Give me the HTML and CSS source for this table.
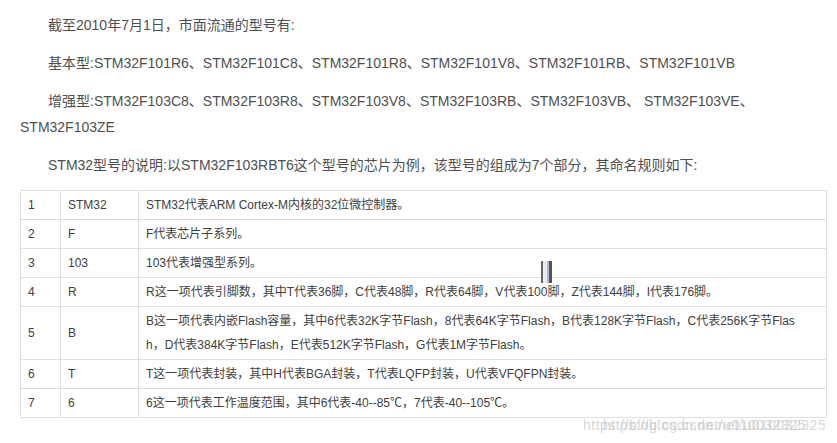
FILE: index.html
```html
<!DOCTYPE html>
<html lang="zh-CN">

<head>
    <meta charset="UTF-8">
    <meta name="viewport" content="width=device-width, initial-scale=1.0">
    <title>STM32型号</title>
    <link rel="stylesheet" href="styles.css">
</head>

<body>
    <div class="article">
        <p>截至2010年7月1日，市面流通的型号有:</p>
        <p>基本型:STM32F101R6、STM32F101C8、STM32F101R8、STM32F101V8、STM32F101RB、STM32F101VB</p>
        <p>增强型:STM32F103C8、STM32F103R8、STM32F103V8、STM32F103RB、STM32F103VB、 STM32F103VE、STM32F103ZE</p>
        <p>STM32型号的说明:以STM32F103RBT6这个型号的芯片为例，该型号的组成为7个部分，其命名规则如下:</p>

        <table class="spec-table">
            <colgroup>
                <col class="col-no">
                <col class="col-code">
                <col>
            </colgroup>
            <tbody>
                <tr><td>1</td><td>STM32</td><td class="desc">STM32代表ARM Cortex-M内核的32位微控制器。</td></tr>
                <tr><td>2</td><td>F</td><td class="desc">F代表芯片子系列。</td></tr>
                <tr><td>3</td><td>103</td><td class="desc">103代表增强型系列。</td></tr>
                <tr><td>4</td><td>R</td><td class="desc">R这一项代表引脚数，其中T代表36脚，C代表48脚，R代表64脚，V代表100脚，Z代表144脚，I代表176脚。</td></tr>
                <tr><td>5</td><td>B</td><td class="desc">B这一项代表内嵌Flash容量，其中6代表32K字节Flash，8代表64K字节Flash，B代表128K字节Flash，C代表256K字节Flash，D代表384K字节Flash，E代表512K字节Flash，G代表1M字节Flash。</td></tr>
                <tr><td>6</td><td>T</td><td class="desc">T这一项代表封装，其中H代表BGA封装，T代表LQFP封装，U代表VFQFPN封装。</td></tr>
                <tr><td>7</td><td>6</td><td class="desc">6这一项代表工作温度范围，其中6代表-40--85℃，7代表-40--105℃。</td></tr>
            </tbody>
        </table>
    </div>

    <div class="caret"><span class="caret-gap"></span><span class="caret-bars"></span></div>

    <div class="watermark">
        <span class="wm wm-a">https://blog.csdn.net/u010032325</span>
        <span class="wm wm-b">https://blog.csdn.net/u010032325</span>
    </div>
</body>

</html>
```

FILE: styles.css
```css
* {
    margin: 0;
    padding: 0;
    box-sizing: border-box;
}

body {
    background: #fff;
    font-family: "Liberation Sans", Arial, "Noto Sans CJK SC", sans-serif;
    color: #4f4f4f;
    position: relative;
    min-height: 443px;
    overflow: hidden;
}

.article {
    padding: 12px 10px 0 20px;
}

.article p {
    font-size: 14px;
    line-height: 26px;
    text-indent: 28px;
    margin-bottom: 12px;
}

.spec-table {
    margin-top: 2px;
    width: 807px;
    table-layout: fixed;
    border-collapse: collapse;
    font-size: 12px;
    line-height: 24px;
    color: #404040;
}

.col-no {
    width: 40px;
}

.col-code {
    width: 78px;
}

.spec-table td {
    border: 1px solid #dfdfdf;
    padding: 2px 6px 2px 7px;
    vertical-align: middle;
    word-break: break-all;
}

.spec-table td.desc {
    padding-right: 16px;
}

.caret {
    position: absolute;
    left: 500px;
    top: 261px;
    width: 113px;
    height: 24px;
}

.caret-gap {
    position: absolute;
    left: 0;
    bottom: 5px;
    width: 113px;
    height: 2px;
    background: #fff;
}

.caret-bars {
    position: absolute;
    left: 41px;
    top: 0;
    width: 11px;
    height: 22px;
    background: linear-gradient(90deg, #666 0 2px, #ececec 2px 6px, #a9b8dc 6px 8px, #555 8px 11px);
}

.watermark {
    position: absolute;
    left: 583px;
    top: 417px;
    width: 244px;
    height: 16px;
}

.wm {
    position: absolute;
    top: 0;
    font-size: 14px;
    letter-spacing: 0.5px;
    color: rgba(200, 200, 200, 0.75);
    white-space: nowrap;
}

.wm-a {
    left: 0;
}

.wm-b {
    left: 20px;
    color: rgba(190, 190, 190, 0.6);
}
```
